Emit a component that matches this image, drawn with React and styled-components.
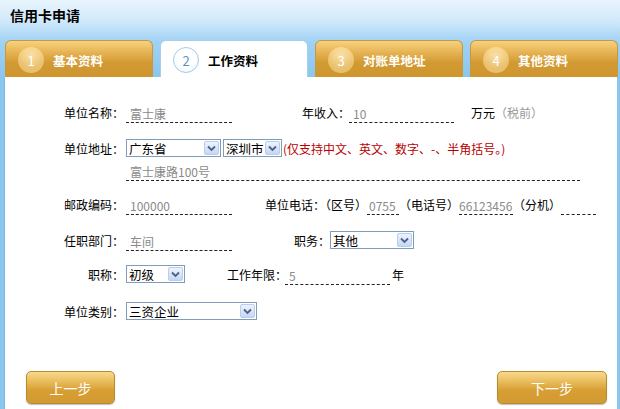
import React from 'react';
import styled, { createGlobalStyle } from 'styled-components';

const GlobalStyle = createGlobalStyle`
  html, body {
    margin: 0;
    padding: 0;
    background: #ffffff;
  }
  body {
    font-family: 'Noto Sans CJK SC', 'Noto Sans', sans-serif;
    font-size: 12px;
    color: #000;
  }
`;

const Page = styled.div`
  width: 620px;
  height: 409px;
  display: flex;
  flex-direction: column;
  overflow: hidden;
  background: linear-gradient(#e9f5fd 0px, #cfe8fa 22px, #9fd2f5 42px, #8ac6ee 77px, #8ac6ee 100%);
`;

const Header = styled.div`
  height: 40px;
  box-sizing: border-box;
  padding: 5px 0 0 10px;
  font-size: 14px;
  font-weight: bold;
  line-height: 20px;
`;

const TabBar = styled.div`
  height: 37px;
  display: flex;
  align-items: stretch;
  gap: 7px;
  padding-left: 5px;
`;

const Tab = styled.div`
  width: 148px;
  box-sizing: border-box;
  display: flex;
  align-items: center;
  gap: 9px;
  padding: 2px 0 0 12px;
  border-radius: 6px 6px 0 0;
  border: 1px solid ${({ $active }) => ($active ? '#a9cde9' : '#c9983e')};
  border-bottom: none;
  background: ${({ $active }) =>
    $active ? '#ffffff' : 'linear-gradient(#f6d27f 0%, #e4b04f 35%, #d29a33 60%, #cf9630 100%)'};
  color: ${({ $active }) => ($active ? '#000' : '#fff')};
  font-size: 12.5px;
  font-weight: bold;
`;

const Circle = styled.span`
  width: 26px;
  height: 26px;
  border-radius: 50%;
  box-sizing: border-box;
  display: flex;
  align-items: center;
  justify-content: center;
  font-size: 13px;
  font-weight: normal;
  color: ${({ $active }) => ($active ? '#4f95cc' : '#fff')};
  border: ${({ $active }) => ($active ? '1px solid #a3cbe6' : 'none')};
  background: ${({ $active }) =>
    $active
      ? 'radial-gradient(circle at 50% 40%, #ffffff 50%, #e6f2fa 100%)'
      : 'radial-gradient(circle at 50% 35%, rgba(255,236,190,0.8) 0%, rgba(250,220,150,0.6) 60%, rgba(255,230,170,0.5) 100%)'};
`;

const Panel = styled.div`
  flex: 1;
  margin: 0 3px 0 4px;
  border-left: 1px solid #79b8e4;
  background: #fff;
  display: flex;
  flex-direction: column;
`;

const Form = styled.div`
  display: flex;
  flex-direction: column;
  padding-left: 40px;
`;

const Row = styled.div`
  height: 22px;
  margin-top: ${({ $top }) => $top}px;
  display: flex;
  align-items: center;
`;

const Label = styled.span`
  width: ${({ $w }) => $w || 79}px;
  margin-left: ${({ $ml }) => $ml || 0}px;
  text-align: right;
  white-space: nowrap;
  margin-right: 2px;
`;

const Text = styled.span`
  white-space: nowrap;
  margin-left: ${({ $ml }) => $ml || 0}px;
  color: ${({ $muted }) => ($muted ? '#999' : '#000')};
`;

const Hint = styled.span`
  color: #b80000;
  white-space: nowrap;
  margin-left: 1px;
`;

const Input = styled.div`
  width: ${({ $w }) => $w}px;
  height: 18px;
  box-sizing: border-box;
  padding-left: ${({ $pl }) => ($pl === undefined ? 4 : $pl)}px;
  border-bottom: 1px dashed #222;
  color: #8a8a8a;
  line-height: 18px;
  font-size: 12px;
  white-space: nowrap;
  overflow: hidden;
  margin-top: 4px;
`;

const Select = styled.div`
  width: ${({ $w }) => $w}px;
  height: 18px;
  box-sizing: border-box;
  border: 1px solid #7f9db9;
  background: #fff;
  display: flex;
  align-items: center;
  justify-content: space-between;
  padding: 0 1px 0 2px;
  margin-left: ${({ $ml }) => $ml || 0}px;
  font-size: 12.5px;
`;

const Arrow = styled.span`
  width: 15px;
  height: 14px;
  box-sizing: border-box;
  border: 1px solid #b8cdef;
  border-radius: 2px;
  background: linear-gradient(#eef3fd, #c5d7f5);
  display: flex;
  align-items: center;
  justify-content: center;
`;

const Footer = styled.div`
  margin-top: auto;
  display: flex;
  justify-content: space-between;
  padding: 0 10px 5px 21px;
`;

const StepButton = styled.button`
  width: ${({ $w }) => $w}px;
  height: 33px;
  border: 1px solid #b88b31;
  border-radius: 5px;
  background: linear-gradient(#f8d98c 0%, #eabd5c 30%, #d79e34 60%, #d39a31 100%);
  color: #fff;
  font-family: 'Noto Sans CJK SC', sans-serif;
  font-size: 14px;
  box-shadow: 0 1px 1px rgba(0, 0, 0, 0.25);
  padding: 0;
`;

const Chevron = () => (
  <svg width="9" height="7" viewBox="0 0 9 7">
    <path d="M1 1.5 L4.5 5 L8 1.5" fill="none" stroke="#4d6185" strokeWidth="1.8" />
  </svg>
);

const Dropdown = ({ w, ml, children }) => (
  <Select $w={w} $ml={ml}>
    <span>{children}</span>
    <Arrow>
      <Chevron />
    </Arrow>
  </Select>
);

const tabs = [
  { n: 1, name: '基本资料' },
  { n: 2, name: '工作资料', active: true },
  { n: 3, name: '对账单地址' },
  { n: 4, name: '其他资料' },
];

export default function App() {
  return (
    <>
      <GlobalStyle />
      <Page>
        <Header>信用卡申请</Header>
        <TabBar>
          {tabs.map((t) => (
            <Tab key={t.n} $active={t.active}>
              <Circle $active={t.active}>{t.n}</Circle>
              {t.name}
            </Tab>
          ))}
        </TabBar>
        <Panel>
          <Form>
            <Row $top={24}>
              <Label>单位名称：</Label>
              <Input $w={106}>富士康</Input>
              <Label $w={45} $ml={70}>年收入：</Label>
              <Input $w={105}>10</Input>
              <Text $ml={17}>万元</Text>
              <Text $muted>（税前）</Text>
            </Row>
            <Row $top={14}>
              <Label>单位地址：</Label>
              <Dropdown w={95}>广东省</Dropdown>
              <Dropdown w={59} ml={2}>深圳市</Dropdown>
              <Hint>(仅支持中文、英文、数字、-、半角括号。)</Hint>
            </Row>
            <Row $top={0}>
              <Label />
              <Input $w={454}>富士康路100号</Input>
            </Row>
            <Row $top={12}>
              <Label>邮政编码：</Label>
              <Input $w={106}>100000</Input>
              <Text $ml={33}>单位电话：（区号）</Text>
              <Input $w={32} $pl={2}>0755</Input>
              <Text>（电话号）</Text>
              <Input $w={54} $pl={0}>66123456</Input>
              <Text>（分机）</Text>
              <Input $w={35} />
            </Row>
            <Row $top={14}>
              <Label>任职部门：</Label>
              <Input $w={106}>车间</Input>
              <Label $w={34} $ml={62}>职务：</Label>
              <Dropdown w={84}>其他</Dropdown>
            </Row>
            <Row $top={12}>
              <Label>职称：</Label>
              <Dropdown w={59}>初级</Dropdown>
              <Label $w={56} $ml={42}>工作年限：</Label>
              <Input $w={105}>5</Input>
              <Text $ml={2}>年</Text>
            </Row>
            <Row $top={15}>
              <Label>单位类别：</Label>
              <Dropdown w={131}>三资企业</Dropdown>
            </Row>
          </Form>
          <Footer>
            <StepButton $w={89}>上一步</StepButton>
            <StepButton $w={110}>下一步</StepButton>
          </Footer>
        </Panel>
      </Page>
    </>
  );
}
